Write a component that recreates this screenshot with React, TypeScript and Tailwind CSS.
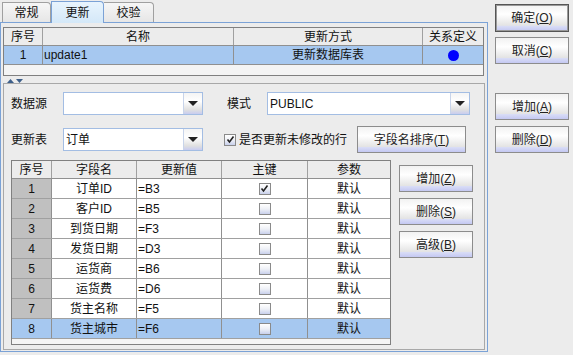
import React from "react";

const btnBg =
  "bg-[linear-gradient(to_bottom,#f2f2f2_0%,#ffffff_35%,#e4e4e4_78%,#d8dcf6_82%,#c4c8f2_100%)]";

function Btn({
  label,
  k,
  className,
  def,
}: {
  label: string;
  k: string;
  className: string;
  def?: boolean;
}) {
  return (
    <div
      className={`${className} ${btnBg} flex items-center justify-center text-[12px] text-[#222] ${
        def ? "border border-[#555] shadow-[inset_0_0_0_1px_#9a9a9a]" : "border border-[#8c8c8c]"
      }`}
    >
      <span>
        {label}(<span className="underline">{k}</span>)
      </span>
    </div>
  );
}

function Combo({ text, className }: { text: string; className: string }) {
  return (
    <div className={`${className} h-[23px] flex border border-[#a3bde3] bg-white`}>
      <div className="flex-1 flex items-center pl-[2px] text-[12px] text-[#111]">{text}</div>
      <div className="w-[19px] border-l border-[#c8d4ea] bg-[linear-gradient(to_bottom,#f4f4f4_0%,#ffffff_40%,#e0e0e0_80%,#c8ccf0_100%)] flex items-center justify-center">
        <div className="w-0 h-0 border-l-[5px] border-r-[5px] border-t-[5px] border-l-transparent border-r-transparent border-t-[#222]" />
      </div>
    </div>
  );
}

function Check({ checked }: { checked?: boolean }) {
  return (
    <div className="w-[12px] h-[12px] border border-[#8a8a8a] bg-[linear-gradient(to_bottom,#ffffff_0%,#eef0f6_50%,#c8d0ec_100%)] flex items-center justify-center">
      {checked && (
        <svg width="9" height="9" viewBox="0 0 9 9">
          <path d="M1.5 4.5 L3.5 7 L7.5 1.5" stroke="#222" strokeWidth="1.6" fill="none" />
        </svg>
      )}
    </div>
  );
}

const rows = [
  ["1", "订单ID", "=B3", true],
  ["2", "客户ID", "=B5", false],
  ["3", "到货日期", "=F3", false],
  ["4", "发货日期", "=D3", false],
  ["5", "运货商", "=B6", false],
  ["6", "运货费", "=D6", false],
  ["7", "货主名称", "=F5", false],
  ["8", "货主城市", "=F6", false],
] as const;

export default function App() {
  return (
    <div className="w-[573px] h-[355px] bg-[#ececec] flex [font-family:'Liberation_Sans','Noto_Sans_CJK_SC',sans-serif] text-[12px] text-[#111] overflow-hidden">
      {/* Tab pane */}
      <div className="w-[488px] flex flex-col">
        <div className="h-[22px] flex items-end pl-[2px]">
          <div className="w-[49px] h-[20px] border border-b-0 border-[#a0a0a0] rounded-tr-[4px] bg-[linear-gradient(to_bottom,#f6f6f6,#e6e6e6)] flex items-center justify-center text-[12px]">
            常规
          </div>
          <div className="w-[53px] h-[22px] border border-b-0 border-[#7ba2d6] rounded-tr-[4px] bg-[linear-gradient(to_bottom,#e8f4fd,#d4e8f8)] flex items-center justify-center text-[12px] relative top-[1px]">
            更新
          </div>
          <div className="w-[50px] h-[20px] border border-b-0 border-l-0 border-[#a0a0a0] rounded-tr-[4px] bg-[linear-gradient(to_bottom,#f6f6f6,#e6e6e6)] flex items-center justify-center text-[12px]">
            校验
          </div>
        </div>
        <div className="h-[330px] border border-[#7ba2d6] flex flex-col px-[2px] pt-[4px] pb-[1px]">
          {/* Upper table */}
          <div className="h-[49px] border border-[#808080] bg-[#f4f4f4] flex flex-col ml-[0px] mr-[1px]">
            <div className="h-[18px] flex bg-[#ececec] border-b border-[#909090]">
              <div className="w-[39px] border-r border-[#a0a0a0] flex items-center justify-center">序号</div>
              <div className="w-[191px] border-r border-[#a0a0a0] flex items-center justify-center">名称</div>
              <div className="w-[189px] border-r border-[#a0a0a0] flex items-center justify-center">更新方式</div>
              <div className="flex-1 flex items-center justify-center">关系定义</div>
            </div>
            <div className="h-[19px] flex bg-[#a6c8f0] border-b border-[#909090]">
              <div className="w-[39px] border-r border-[#909090] flex items-center justify-center">1</div>
              <div className="w-[191px] border-r border-[#909090] flex items-center pl-[1px]">update1</div>
              <div className="w-[189px] border-r border-[#909090] flex items-center justify-center">更新数据库表</div>
              <div className="flex-1 flex items-center justify-center">
                <div className="w-[11px] h-[11px] rounded-full bg-[#0000ff]" />
              </div>
            </div>
          </div>
          {/* Divider */}
          <div className="h-[7px] flex items-end pl-[3px] pb-[0px]">
            <svg width="18" height="5" viewBox="0 0 18 5">
              <path d="M1 5 L4.5 1 L8 5 Z" fill="#3d5f8a" />
              <path d="M10 1 L17 1 L13.5 5 Z" fill="#3d5f8a" />
            </svg>
          </div>
          {/* Lower panel */}
          <div className="flex-1 border border-[#a8a8a8] flex flex-col pl-[7px] pt-[8px]">
            <div className="flex items-center h-[23px]">
              <div className="w-[52px]">数据源</div>
              <Combo text="" className="w-[140px]" />
              <div className="w-[40px] ml-[24px]">模式</div>
              <Combo text="PUBLIC" className="w-[203px]" />
            </div>
            <div className="flex items-center h-[27px] mt-[11px]">
              <div className="w-[52px]">更新表</div>
              <Combo text="订单" className="w-[140px]" />
              <div className="ml-[21px] flex items-center">
                <Check checked />
                <span className="ml-[3px]">是否更新未修改的行</span>
              </div>
              <Btn label="字段名排序" k="T" className="w-[109px] h-[27px] ml-[10px]" />
            </div>
            <div className="flex mt-[7px]">
              {/* Inner table */}
              <div className="w-[380px] h-[185px] border border-[#808080] bg-[#f4f4f4] flex flex-col">
                <div className="h-[18px] flex bg-[#ececec] border-b border-[#909090]">
                  <div className="w-[40px] border-r border-[#a0a0a0] flex items-center justify-center">序号</div>
                  <div className="w-[85px] border-r border-[#a0a0a0] flex items-center justify-center">字段名</div>
                  <div className="w-[85px] border-r border-[#a0a0a0] flex items-center justify-center">更新值</div>
                  <div className="w-[86px] border-r border-[#a0a0a0] flex items-center justify-center">主键</div>
                  <div className="flex-1 flex items-center justify-center">参数</div>
                </div>
                {rows.map(([n, name, val, pk]) => {
                  const sel = n === "8";
                  return (
                    <div
                      key={n}
                      className={`h-[20px] flex border-b border-[#a0a0a0] ${sel ? "bg-[#a6c8f0]" : "bg-white"}`}
                    >
                      <div
                        className={`w-[40px] border-r border-[#909090] flex items-center justify-center ${
                          sel ? "bg-[#a6c8f0]" : "bg-[#c0c0c0]"
                        }`}
                      >
                        {n}
                      </div>
                      <div className="w-[85px] border-r border-[#909090] flex items-center justify-center">{name}</div>
                      <div className="w-[85px] border-r border-[#909090] flex items-center pl-[1px]">{val}</div>
                      <div className="w-[86px] border-r border-[#909090] flex items-center justify-center">
                        <Check checked={pk} />
                      </div>
                      <div className="flex-1 flex items-center justify-center">默认</div>
                    </div>
                  );
                })}
              </div>
              <div className="flex flex-col ml-[8px] pt-[5px] gap-[6px]">
                <Btn label="增加" k="Z" className="w-[74px] h-[27px]" />
                <Btn label="删除" k="S" className="w-[74px] h-[27px]" />
                <Btn label="高级" k="B" className="w-[74px] h-[27px]" />
              </div>
            </div>
          </div>
        </div>
      </div>
      {/* Right buttons */}
      <div className="flex flex-col pl-[7px] pt-[4px]">
        <Btn label="确定" k="O" className="w-[74px] h-[28px]" def />
        <Btn label="取消" k="C" className="w-[74px] h-[27px] mt-[5px]" />
        <Btn label="增加" k="A" className="w-[74px] h-[27px] mt-[29px]" />
        <Btn label="删除" k="D" className="w-[74px] h-[27px] mt-[6px]" />
      </div>
    </div>
  );
}
